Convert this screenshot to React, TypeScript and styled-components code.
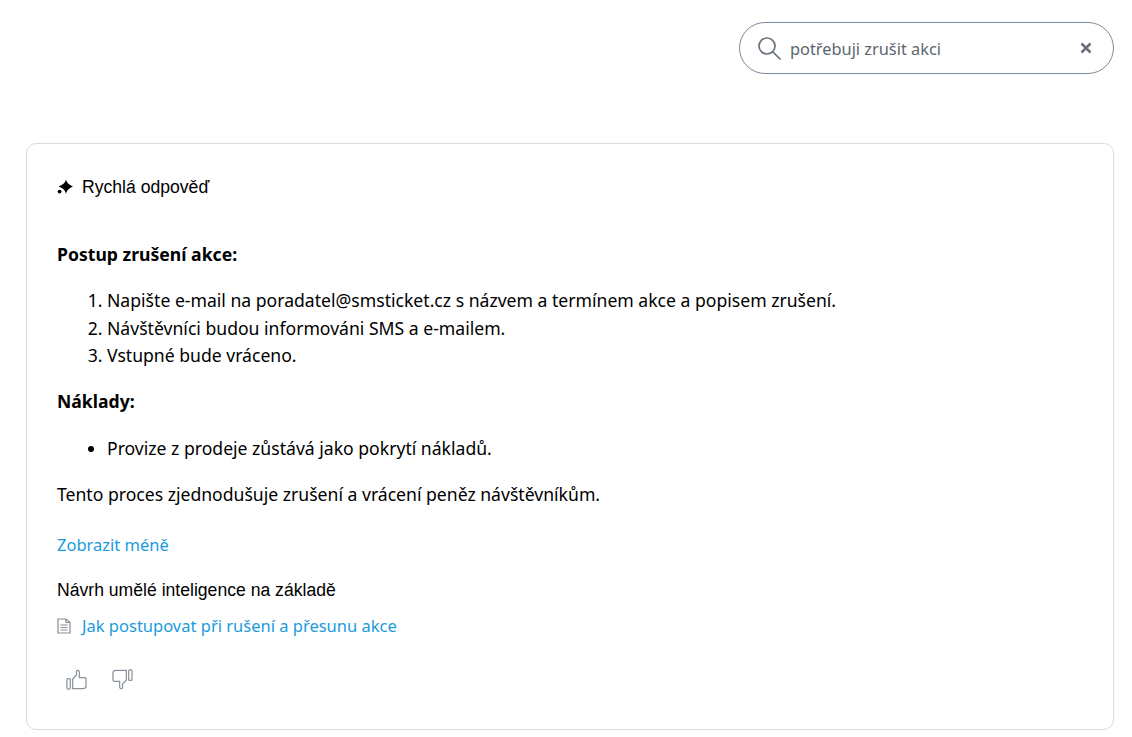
import React from "react";
import styled, { createGlobalStyle } from "styled-components";

const Global = createGlobalStyle`
  html, body { margin: 0; padding: 0; background: #fff; }
  body { font-family: "Noto Sans", "Open Sans", sans-serif; color: #000; }
`;
const Page = styled.div`
  width: 1132px; height: 737px; box-sizing: border-box; padding: 22px 18px 0 26px; overflow: hidden;
`;
const Top = styled.div`display: flex; justify-content: flex-end; margin-bottom: 69px;`;
const Search = styled.div`
  width: 375px; height: 52px; box-sizing: border-box; border: 1px solid #7d8a99; border-radius: 26px;
  display: flex; align-items: center; padding: 0 21px 0 17px; color: #5f6b76;
`;
const SearchText = styled.span`
  flex: 1; font-size: 16.35px; margin-left: 9px; padding-top: 1px; color: #5c6670; line-height: 24px;
`;
const Card = styled.section`
  width: 1088px; height: 587px; box-sizing: border-box; border: 1px solid #dcdcdc; border-radius: 10px;
  padding: 32px 30px 0 30px;
`;
const Head = styled.div`
  display: flex; align-items: center; gap: 8px; height: 22px;
  font-family: "Liberation Sans", Arial, sans-serif; font-size: 17.6px;
`;
const Para = styled.p<{ $top: number }>`
  margin: ${p => p.$top}px 0 0; font-size: 17.6px; line-height: 27.5px;
`;
const Strong = styled(Para)`font-weight: 700;`;
const Ol = styled.ol`
  margin: 18.5px 0 0; padding: 0 0 0 50px; font-size: 17.6px; line-height: 27.5px;
`;
const Ul = styled.ul`
  margin: 19px 0 0; padding: 0 0 0 50px; font-size: 17.6px; line-height: 27.5px;
`;
const More = styled.a`
  display: block; margin-top: 22px; color: #1a9bdc; font-size: 16.5px; line-height: 27px;
`;
const Based = styled.div`
  margin-top: 21px; height: 22px; line-height: 22px;
  font-family: "Liberation Sans", Arial, sans-serif; font-size: 17.6px;
`;
const Source = styled.div`
  margin-top: 12px; display: flex; align-items: center; gap: 11px; height: 26px;
`;
const SourceLink = styled.a`color: #1a9bdc; font-size: 16.5px; line-height: 26px;`;
const Votes = styled.div`
  margin: 30px 0 0 9px; display: flex; align-items: center; gap: 25px; color: #8a939c;
`;

export default function App() {
  return (
    <Page>
      <Global />
      <Top>
        <Search>
          <svg width="24" height="24" viewBox="0 0 24 24" fill="none" stroke="#68727c" strokeWidth="1.7">
            <circle cx="10" cy="10" r="8" />
            <path d="M16 16l7 7" strokeLinecap="round" />
          </svg>
          <SearchText>potřebuji zrušit akci</SearchText>
          <svg width="12" height="12" viewBox="0 0 12 12" fill="none" stroke="#68727c" strokeWidth="2.6">
            <path d="M1.5 1.5l9 9M10.5 1.5l-9 9" />
          </svg>
        </Search>
      </Top>
      <Card>
        <Head>
          <svg width="17" height="16" viewBox="0 0 17 16" fill="#000">
            <path d="M9 .5C10 4 11.5 5.5 16 7.5 11.5 9.5 10 11 9 15 8 11 6.5 9.5 1.5 7.5 6.5 5.5 8 4 9 .5Z" />
            <circle cx="2.6" cy="12.6" r="1.9" />
          </svg>
          Rychlá odpověď
        </Head>
        <Strong $top={43}>Postup zrušení akce:</Strong>
        <Ol>
          <li>Napište e-mail na poradatel@smsticket.cz s názvem a termínem akce a popisem zrušení.</li>
          <li>Návštěvníci budou informováni SMS a e-mailem.</li>
          <li>Vstupné bude vráceno.</li>
        </Ol>
        <Strong $top={18.5}>Náklady:</Strong>
        <Ul>
          <li>Provize z prodeje zůstává jako pokrytí nákladů.</li>
        </Ul>
        <Para $top={19}>Tento proces zjednodušuje zrušení a vrácení peněz návštěvníkům.</Para>
        <More>Zobrazit méně</More>
        <Based>Návrh umělé inteligence na základě</Based>
        <Source>
          <svg width="14" height="16" viewBox="0 0 14 16" fill="none" stroke="#848d96" strokeWidth="1.2">
            <path d="M1 1h8l4 3.5V15H1Z" />
            <path d="M9 1v3.5h4M3.5 7h7M3.5 9.5h7M3.5 12h7" />
          </svg>
          <SourceLink>Jak postupovat při rušení a přesunu akce</SourceLink>
        </Source>
        <Votes>
          <svg width="21" height="21" viewBox="0 0 22 22" fill="none" stroke="#8a939c" strokeWidth="1.3">
            <rect x="1" y="10" width="3.5" height="11" rx="1" />
            <path d="M7 20.5V10.5l4-4.5V2.5c0-1.5 3-1.5 3 1V9h5.5c1 0 1.5.7 1.5 1.5v7c0 2-1.5 3-3 3Z" />
          </svg>
          <svg width="21" height="21" viewBox="0 0 22 22" fill="none" stroke="#8a939c" strokeWidth="1.3" transform="rotate(180)">
            <rect x="1" y="10" width="3.5" height="11" rx="1" />
            <path d="M7 20.5V10.5l4-4.5V2.5c0-1.5 3-1.5 3 1V9h5.5c1 0 1.5.7 1.5 1.5v7c0 2-1.5 3-3 3Z" />
          </svg>
        </Votes>
      </Card>
    </Page>
  );
}
